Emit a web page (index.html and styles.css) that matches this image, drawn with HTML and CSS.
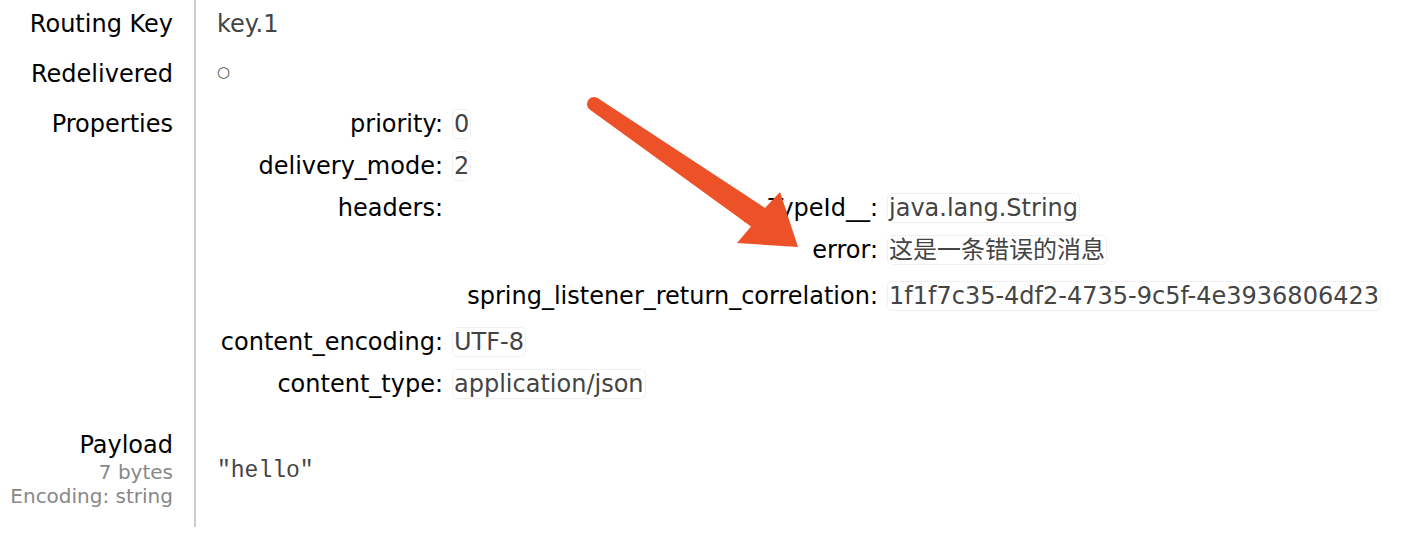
FILE: index.html
```html
<!DOCTYPE html>
<html>
<head>
<meta charset="utf-8">
<link rel="stylesheet" href="styles.css">
</head>
<body>
<div class="page">
  <div class="facts">
    <div class="label">Routing Key</div>
    <div class="value">key.1</div>

    <div class="label">Redelivered</div>
    <div class="value"><span class="circle">○</span></div>

    <div class="label">Properties</div>
    <div class="value props-cell">
      <div class="props">
        <div class="k">priority:</div>
        <div class="v"><span class="box">0</span></div>

        <div class="k">delivery_mode:</div>
        <div class="v"><span class="box">2</span></div>

        <div class="k">headers:</div>
        <div class="v">
          <div class="nested">
            <div class="k">__TypeId__:</div>
            <div class="v"><span class="box">java.lang.String</span></div>

            <div class="k tall">error:</div>
            <div class="v tall"><span class="box">这是一条错误的消息</span></div>

            <div class="k last">spring_listener_return_correlation:</div>
            <div class="v last"><span class="box">1f1f7c35-4df2-4735-9c5f-4e3936806423</span></div>
          </div>
        </div>

        <div class="k">content_encoding:</div>
        <div class="v"><span class="box">UTF-8</span></div>

        <div class="k">content_type:</div>
        <div class="v"><span class="box">application/json</span></div>
      </div>
    </div>

    <div class="label payload-label">
      <div>Payload</div>
      <div class="small">7 bytes</div>
      <div class="small">Encoding: string</div>
    </div>
    <div class="value payload-value"><pre class="payload">"hello"</pre></div>
  </div>

  <svg class="arrow" width="1424" height="540" viewBox="0 0 1424 540">
    <circle cx="594" cy="104" r="7" fill="#ed5127"/>
    <polygon fill="#ed5127" points="598,98.3 765,208 780,192 798,247 737,243 751,226.5 590,109.7"/>
  </svg>
</div>
</body>
</html>
```

FILE: styles.css
```css
html, body {
  margin: 0;
  padding: 0;
  background: #fff;
}

body {
  font-family: "DejaVu Sans", "Noto Sans CJK SC", sans-serif;
  font-size: 24px;
  line-height: 30px;
  color: #000;
}

.page {
  position: relative;
  width: 1424px;
  height: 540px;
  overflow: hidden;
}

.facts {
  display: grid;
  grid-template-columns: 194px 1fr;
}

.label {
  text-align: right;
  padding: 9px 21px 11px 0;
  white-space: nowrap;
}

.value {
  border-left: 2px solid #cccccc;
  padding: 9px 0 11px 21px;
  color: #444;
  white-space: nowrap;
}

.circle {
  display: inline-block;
  vertical-align: top;
  height: 30px;
  font-size: 15px;
  line-height: 26px;
  color: #444;
}

.props-cell {
  padding-bottom: 10px;
}

.props {
  display: grid;
  grid-template-columns: 226px max-content;
  column-gap: 9px;
}

.nested {
  display: grid;
  grid-template-columns: 426px max-content;
  column-gap: 9px;
}

.k {
  text-align: right;
  color: #000;
  padding-bottom: 12px;
  white-space: nowrap;
}

.v {
  color: #444;
  padding-bottom: 12px;
  white-space: nowrap;
}

.nested .k.tall,
.nested .v.tall {
  padding-bottom: 16px;
}

.nested .k.last,
.nested .v.last {
  padding-bottom: 4px;
}

.box {
  display: block;
  width: max-content;
  line-height: 28px;
  padding: 0 1px;
  border: 1px dotted #e2e2e2;
  border-radius: 6px;
}

.payload-label {
  padding-bottom: 19px;
}

.small {
  font-size: 20px;
  line-height: 24px;
  color: #888;
}

.payload {
  margin: 26px 0 0 0;
  font-family: "Liberation Mono", "DejaVu Sans Mono", monospace;
  font-size: 23px;
  line-height: 30px;
  color: #444;
}

.arrow {
  position: absolute;
  left: 0;
  top: 0;
  pointer-events: none;
}
```
